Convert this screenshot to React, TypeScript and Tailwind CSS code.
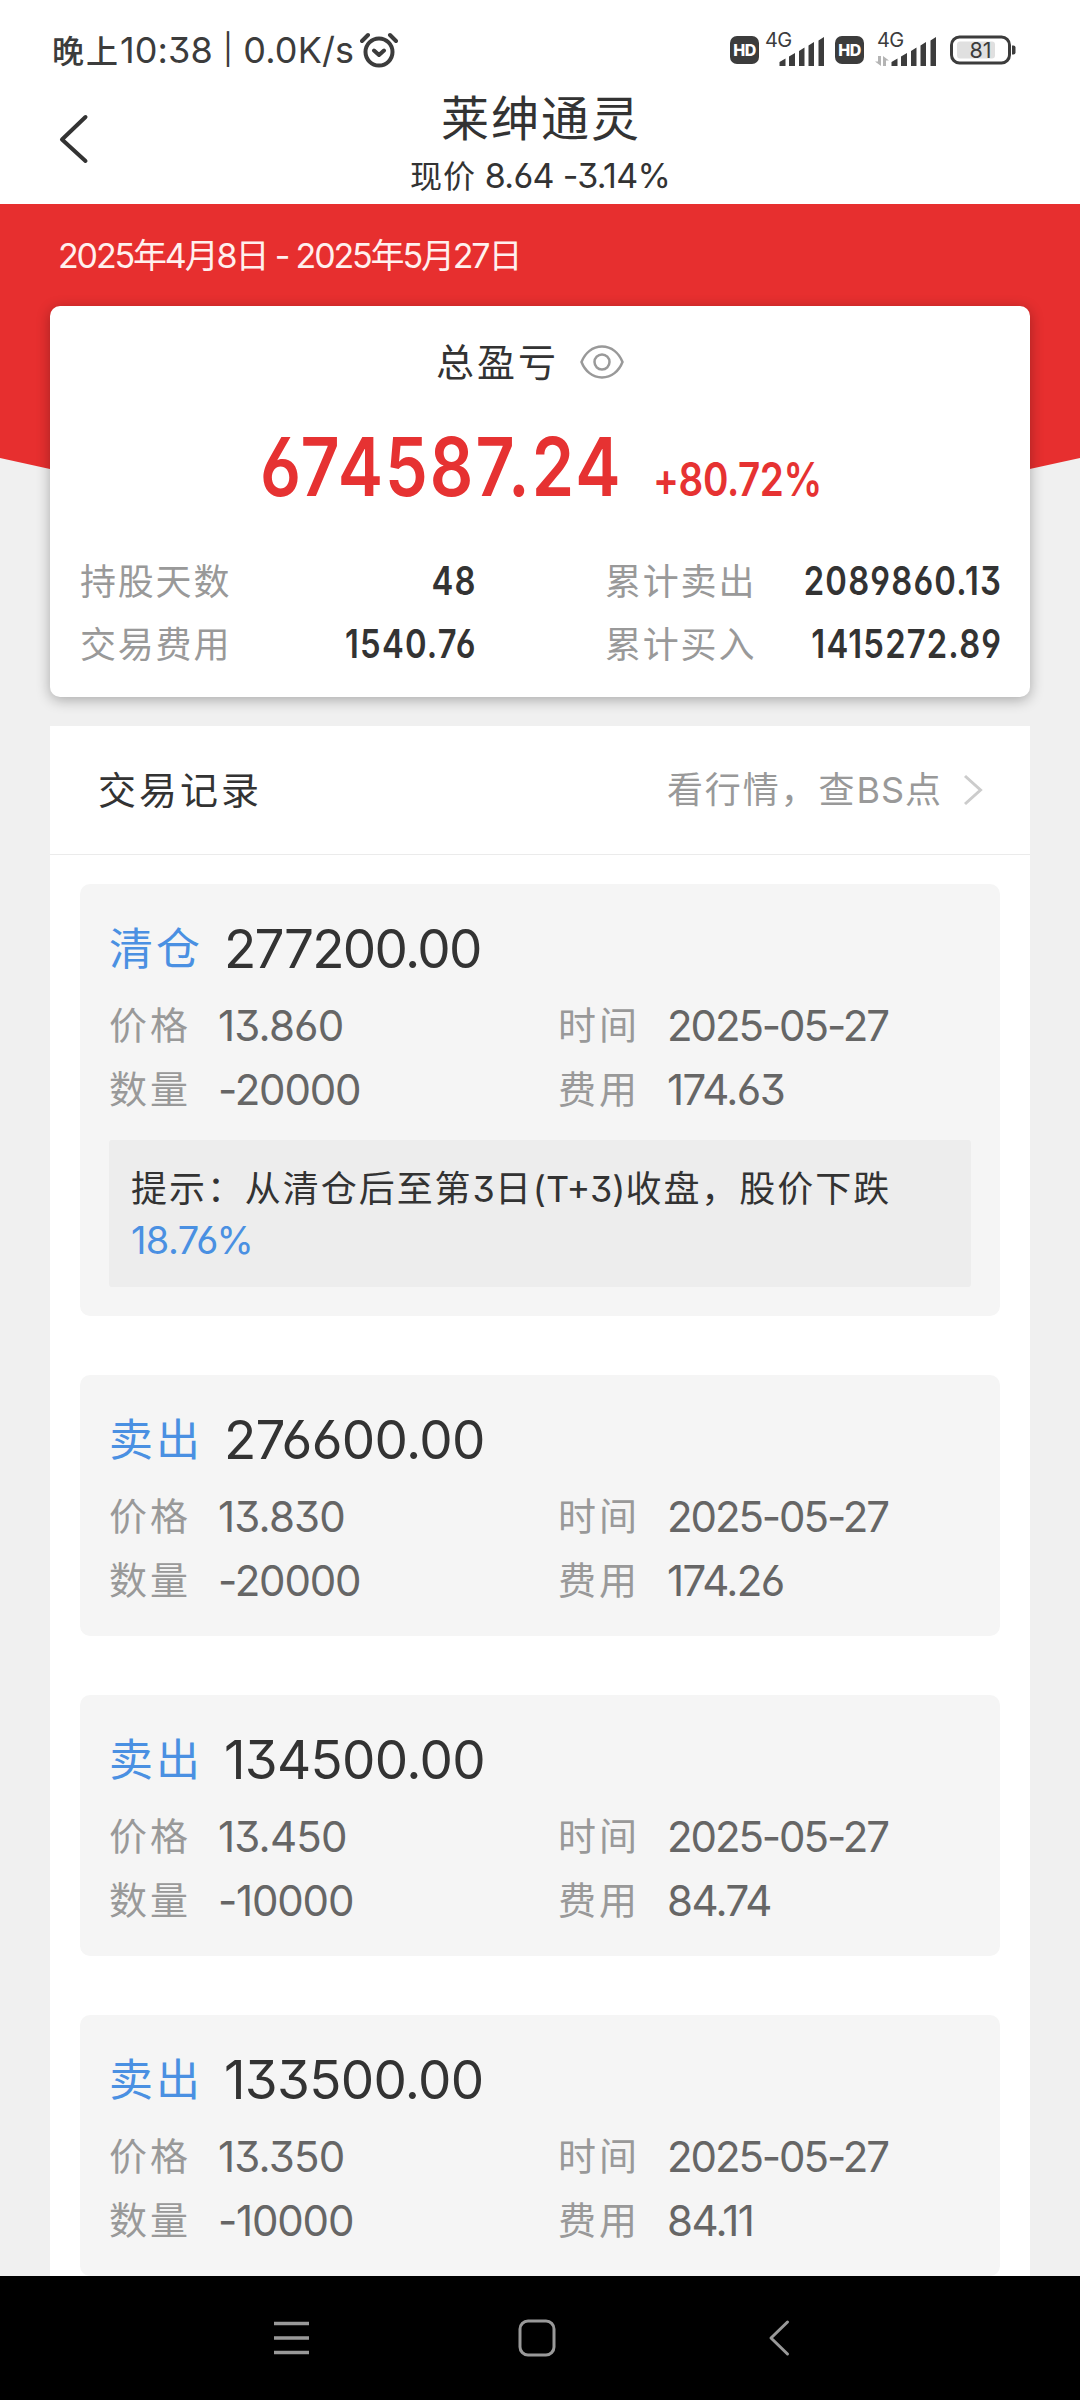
import type { ReactNode } from 'react';

type Trade = {
  id: number;
  type: string;
  amount: string;
  price: string;
  quantity: string;
  date: string;
  fee: string;
  tip?: { text: string; value: string };
};

const trades: Trade[] = [
  {
    id: 1,
    type: '清仓',
    amount: '277200.00',
    price: '13.860',
    quantity: '-20000',
    date: '2025-05-27',
    fee: '174.63',
    tip: { text: '提示：从清仓后至第3日(T+3)收盘，股价下跌', value: '18.76%' },
  },
  { id: 2, type: '卖出', amount: '276600.00', price: '13.830', quantity: '-20000', date: '2025-05-27', fee: '174.26' },
  { id: 3, type: '卖出', amount: '134500.00', price: '13.450', quantity: '-10000', date: '2025-05-27', fee: '84.74' },
  { id: 4, type: '卖出', amount: '133500.00', price: '13.350', quantity: '-10000', date: '2025-05-27', fee: '84.11' },
];

function HdBadge() {
  return (
    <span className="flex h-[28px] w-[29px] items-center justify-center rounded-[7px] bg-[#3c3c3c] text-[16px] leading-none font-extrabold tracking-[-0.5px] text-white">
      HD
    </span>
  );
}

function Signal({ data = false }: { data?: boolean }) {
  return (
    <div className="flex h-[34px] w-[62px] flex-col">
      <span className="h-[14px] pl-[2px] text-[20px] leading-[14px] tracking-[-0.7px]">4G</span>
      <svg className="-mt-[14px]" width="62" height="34" viewBox="0 0 62 34" fill="#3c3c3c">
        <path d="M16.500 33v-4l6-3.500V33zM26 33V23.500l6-3.500v13zM36 33V18l5.500-3.500V33zM45.500 33V12.500l5.500-3.500v24zM55.500 33V7.500L61 4v29z" />
        {data && <path d="M6 23v10L0 28.500h3V23zM8 33V23l6 4.500h-3V33z" fill="#b4b4b4" />}
      </svg>
    </div>
  );
}

function StatusBar() {
  return (
    <div className="flex h-[88px] items-center justify-between pt-[12px] pr-[63px] pl-[52px] text-[#3c3c3c]">
      <div className="flex items-center">
        <span className="text-[36px] leading-[50px] tracking-[0.1px] whitespace-pre">
          <span className="text-[32px] font-medium tracking-[2px]">晚上</span>10:38 <span className="align-[3px] text-[30px]">|</span> 0.0K/s
        </span>
        <svg className="ml-[6px]" width="38" height="36" viewBox="0 0 38 36" fill="none" stroke="#3c3c3c" strokeWidth="4" strokeLinecap="round" strokeLinejoin="round">
          <circle cx="19" cy="20" r="13.500" />
          <path d="M2 9l6-6M36 9l-6-6M14 18.500l5 4.500 5-4.500" />
        </svg>
      </div>
      <div className="flex items-center">
        <HdBadge />
        <div className="ml-[4px]"><Signal /></div>
        <div className="ml-[10px]"><HdBadge /></div>
        <div className="ml-[11px]"><Signal data /></div>
        <svg className="ml-[13px]" width="67" height="30" viewBox="0 0 67 30">
          <rect x="1.500" y="2" width="58" height="26" rx="8" fill="none" stroke="#3c3c3c" strokeWidth="3" />
          <rect x="7" y="6.500" width="38" height="17" rx="3" fill="#e0e0e0" />
          <path d="M62 10.500h1.500a2 2 0 0 1 2 2v5a2 2 0 0 1-2 2H62z" fill="#3c3c3c" />
          <text x="30.500" y="22.500" textAnchor="middle" fontSize="21.500" fontFamily="Inter, sans-serif" fill="#3c3c3c">81</text>
        </svg>
      </div>
    </div>
  );
}

function Header() {
  return (
    <header className="grid h-[116px] grid-cols-[160px_1fr_160px]">
      <button className="flex items-start pt-[26px] pl-[59px]">
        <svg width="30" height="50" viewBox="0 0 30 50" fill="none" stroke="#333" strokeWidth="4" strokeLinecap="round" strokeLinejoin="round">
          <path d="M26.500 3L3 25.500 26.500 47" />
        </svg>
      </button>
      <div className="flex flex-col items-center">
        <h1 className="pt-[3px] pl-[2px] text-[48px] leading-[56px] tracking-[2px] text-[#333]">莱绅通灵</h1>
        <p className="text-[34px] leading-[58px] tracking-[-0.7px] text-[#333]">
          <span className="text-[32px] tracking-[1px]">现价</span> 8.64 -3.14%
        </p>
      </div>
    </header>
  );
}

// Narrow figures used for all the sums inside the summary card
function Figure({ className, children }: { className: string; children: ReactNode }) {
  return <span className={`inline-block scale-x-[0.84] whitespace-nowrap ${className}`}>{children}</span>;
}

function SummaryItem({ label, value }: { label: string; value: string }) {
  return (
    <div className="flex h-[63px] items-center justify-between">
      <span className="text-[36px] tracking-[1.800px] text-[#999]">{label}</span>
      <Figure className="-mr-[2px] origin-right text-[39px] font-semibold tracking-[1.400px] text-[#333]">{value}</Figure>
    </div>
  );
}

function Summary() {
  return (
    <section className="relative px-[50px]">
      <div className="absolute inset-x-0 top-0 h-[373px] bg-[#e72f2f] [clip-path:polygon(0_0,100%_0,100%_254px,50%_373px,0_254px)]" />
      <p className="relative h-[102px] pl-[8px] text-[34px] leading-[103px] tracking-[-2.150px] text-[#fff0ee]">
        2025年4月8日 - 2025年5月27日
      </p>
      <div className="relative h-[391px] rounded-[10px] bg-white px-[30px] pt-[30px] shadow-[0_3px_14px_rgba(0,0,0,0.3)]">
        <div className="flex h-[52px] items-center justify-center pr-[20px]">
          <span className="text-[38px] tracking-[3px] text-[#333]">总盈亏</span>
          <svg className="ml-[21px]" width="44" height="34" viewBox="0 0 44 34" fill="none" stroke="#999" strokeWidth="2.500">
            <path d="M1.500 17C5 8 12.500 1.500 22 1.500S39 8 42.500 17C39 26 31.500 32.500 22 32.500S5 26 1.500 17z" />
            <circle cx="22" cy="17" r="7.500" />
          </svg>
        </div>
        <div className="flex items-baseline pt-[29px] pl-[180px] leading-[100px] text-[#e63232]">
          <Figure className="w-[393px] origin-left text-[81px] font-semibold tracking-[2.400px]">674587.24</Figure>
          <Figure className="origin-left text-[46px] font-semibold tracking-[-0.5px]">+80.72%</Figure>
        </div>
        <div className="mt-[21px] grid grid-cols-[395px_395px] justify-between">
          <SummaryItem label="持股天数" value="48" />
          <SummaryItem label="累计卖出" value="2089860.13" />
          <SummaryItem label="交易费用" value="1540.76" />
          <SummaryItem label="累计买入" value="1415272.89" />
        </div>
      </div>
    </section>
  );
}

function Field({ label, value, className }: { label: string; value: string; className: string }) {
  return (
    <div className="flex h-[64px] items-center text-[#666]">
      <span className="w-[109px] text-[38px] tracking-[3px] text-[#999]">{label}</span>
      <span className={`text-[42px] ${className}`}>{value}</span>
    </div>
  );
}

// Latin runs sit tighter than the Chinese text around them
function TipText({ text }: { text: string }) {
  return (
    <p className="whitespace-nowrap">
      {text.split(/([\x20-\x7e]+)/).map((part, i) => (
        <span key={i} className={i % 2 ? 'tracking-[0px]' : ''}>{part}</span>
      ))}
    </p>
  );
}

function TradeCard({ trade }: { trade: Trade }) {
  return (
    <article className={`rounded-[10px] bg-[#f5f5f5] pt-[40px] pr-[29px] pl-[29px] ${trade.tip ? 'pb-[29px]' : 'pb-[24px]'}`}>
      <div className="flex h-[50px] items-center">
        <span className="w-[115px] text-[44px] tracking-[3px] text-[#4a90e2]">{trade.type}</span>
        <span className={`text-[53px] leading-[50px] text-[#333] ${trade.tip ? 'tracking-[-1.700px]' : 'tracking-[-0.700px]'}`}>
          {trade.amount}
        </span>
      </div>
      <div className="mt-[19px] grid grid-cols-[449px_1fr]">
        <Field label="价格" value={trade.price} className="tracking-[-0.800px]" />
        <Field label="时间" value={trade.date} className="tracking-[-2.100px]" />
        <Field label="数量" value={trade.quantity} className="tracking-[-1.200px]" />
        <Field label="费用" value={trade.fee} className="tracking-[-1.600px]" />
      </div>
      {trade.tip && (
        <div className="mt-[19px] h-[147px] rounded-[3px] bg-[#ededed] px-[22px] pt-[24px] text-[36px] leading-[51px] tracking-[1.950px] text-[#333]">
          <TipText text={trade.tip.text} />
          <p className="text-[38px] tracking-[-0.6px] text-[#4a90e2]">{trade.tip.value}</p>
        </div>
      )}
    </article>
  );
}

function TradeList() {
  return (
    <section className="mx-[50px] mt-[29px] bg-white">
      <div className="flex h-[129px] items-center justify-between border-b border-[#ebebeb] pr-[47px] pl-[48px]">
        <h2 className="text-[38px] tracking-[3px] text-[#333]">交易记录</h2>
        <button className="flex items-center text-[36px] tracking-[1.900px] text-[#999]">
          看行情，查<span className="tracking-[1px]">BS</span>点
          <svg className="ml-[20px]" width="20" height="34" viewBox="0 0 20 34" fill="none" stroke="#ccc" strokeWidth="3">
            <path d="M2 3l15.500 14L2 31" />
          </svg>
        </button>
      </div>
      <div className="flex flex-col gap-[59px] px-[30px] pt-[29px]">
        {trades.map((trade) => (
          <TradeCard key={trade.id} trade={trade} />
        ))}
      </div>
    </section>
  );
}

function NavBar() {
  return (
    <nav className="flex h-[124px] items-center bg-black pl-[273px]">
      <svg width="37" height="38" viewBox="0 0 37 38" stroke="#999" strokeWidth="3.500">
        <path d="M1 4.500h35M1 19h35M1 33.500h35" />
      </svg>
      <svg className="ml-[208px]" width="38" height="38" viewBox="0 0 38 38" fill="none" stroke="#999" strokeWidth="3">
        <rect x="2" y="2" width="34" height="34" rx="8" />
      </svg>
      <svg className="ml-[212px]" width="22" height="38" viewBox="0 0 22 38" fill="none" stroke="#999" strokeWidth="3" strokeLinecap="round" strokeLinejoin="round">
        <path d="M19.500 3L3 19l16.500 16" />
      </svg>
    </nav>
  );
}

export default function App() {
  return (
    <div className="flex h-[2400px] w-[1080px] flex-col overflow-hidden bg-[#f0f0f0] font-['Inter','Noto_Sans_CJK_SC',sans-serif] font-normal [font-feature-settings:'cv03','cv04','cv09']">
      <div className="bg-white">
        <StatusBar />
        <Header />
      </div>
      <main className="h-[2072px] overflow-hidden">
        <Summary />
        <TradeList />
      </main>
      <NavBar />
    </div>
  );
}
